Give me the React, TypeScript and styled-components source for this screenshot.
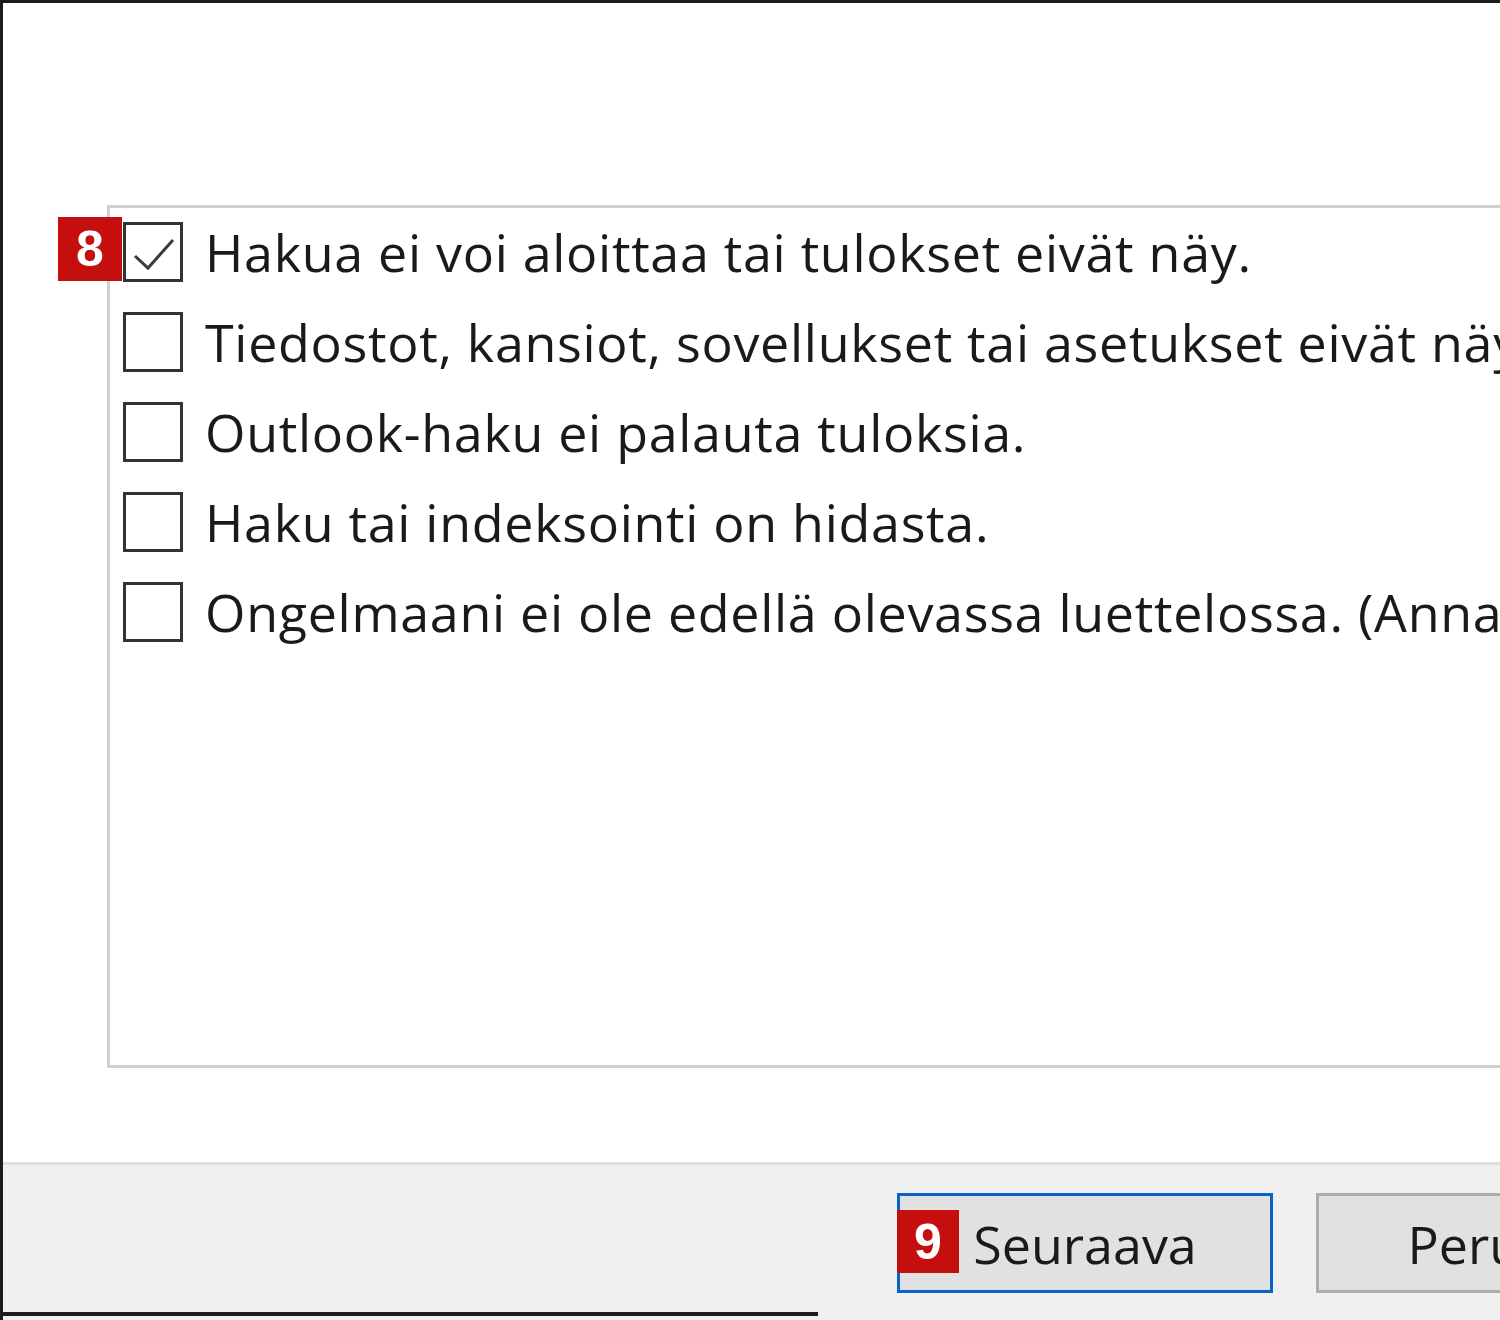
import React from 'react';
import styled, { createGlobalStyle } from 'styled-components';

const GlobalStyle = createGlobalStyle`
  html, body {
    margin: 0;
    padding: 0;
    background: #ffffff;
  }
  body {
    font-family: "Open Sans", "DejaVu Sans", sans-serif;
  }
`;

const items = [
  { label: 'Hakua ei voi aloittaa tai tulokset eivät näy.', checked: true, badge: '8' },
  { label: 'Tiedostot, kansiot, sovellukset tai asetukset eivät näy tuloksissa.', checked: false },
  { label: 'Outlook-haku ei palauta tuloksia.', checked: false },
  { label: 'Haku tai indeksointi on hidasta.', checked: false },
  { label: 'Ongelmaani ei ole edellä olevassa luettelossa. (Anna lisätietoja.)', checked: false },
];

export default function App() {
  return (
    <>
      <GlobalStyle />
      <Window>
        <Content>
          <ListBox>
            {items.map((item) => (
              <Row key={item.label}>
                <Box>
                  {item.badge && <Badge $variant="list">{item.badge}</Badge>}
                  {item.checked && (
                    <svg width="54" height="54" viewBox="0 0 54 54">
                      <polyline
                        points="9,31 22,43 47,15"
                        fill="none"
                        stroke="#3a3a3a"
                        strokeWidth="3"
                      />
                    </svg>
                  )}
                </Box>
                <Label>{item.label}</Label>
              </Row>
            ))}
          </ListBox>
        </Content>
        <Footer>
          <ButtonRow>
            <Button $primary>
              <Badge $variant="button">9</Badge>
              Seuraava
            </Button>
            <Button>Peruuta</Button>
          </ButtonRow>
          <BottomEdge />
        </Footer>
      </Window>
    </>
  );
}

const Window = styled.div`
  width: 1500px;
  height: 1320px;
  box-sizing: border-box;
  border-top: 3px solid #1c1c1c;
  border-left: 3px solid #1c1c1c;
  background: #ffffff;
  display: flex;
  flex-direction: column;
  overflow: hidden;
`;

const Content = styled.div`
  flex: 1;
  padding: 202px 0 0 104px;
`;

const ListBox = styled.div`
  box-sizing: border-box;
  width: 1500px;
  height: 863px;
  border: 3px solid #d0d0d0;
  padding: 14px 0 0 13px;
`;

const Row = styled.div`
  display: flex;
  align-items: center;
  height: 60px;
  margin-bottom: 30px;
  white-space: nowrap;
`;

const Box = styled.div`
  position: relative;
  flex: none;
  box-sizing: border-box;
  width: 60px;
  height: 60px;
  border: 3px solid #333333;
  background: #ffffff;
`;

const Label = styled.span`
  margin-left: 22px;
  font-size: 52px;
  letter-spacing: 0.7px;
  color: #1a1a1a;
  line-height: 60px;
`;

const Badge = styled.span<{ $variant: 'list' | 'button' }>`
  position: absolute;
  left: ${(p) => (p.$variant === 'list' ? '-68px' : '-3px')};
  top: ${(p) => (p.$variant === 'list' ? '-8px' : '14px')};
  width: ${(p) => (p.$variant === 'list' ? '64px' : '62px')};
  height: ${(p) => (p.$variant === 'list' ? '64px' : '63px')};
  background: #c50f0f;
  color: #ffffff;
  font-family: "Liberation Sans", Arial, sans-serif;
  font-weight: bold;
  font-size: 50px;
  letter-spacing: 0;
  line-height: 64px;
  text-align: center;
`;

const Footer = styled.div`
  flex: none;
  height: 158px;
  box-sizing: border-box;
  border-top: 3px solid #dedede;
  background: #f0f0f0;
  display: flex;
  flex-direction: column;
`;

const ButtonRow = styled.div`
  display: flex;
  gap: 43px;
  padding: 28px 0 0 894px;
`;

const Button = styled.button<{ $primary?: boolean }>`
  position: relative;
  flex: none;
  box-sizing: border-box;
  width: 376px;
  height: 100px;
  padding: 0;
  background: #e1e1e1;
  border: 3px solid ${(p) => (p.$primary ? '#0a64c8' : '#adadad')};
  font-family: "Open Sans", "DejaVu Sans", sans-serif;
  font-size: 52px;
  color: #1a1a1a;
  text-align: center;
`;

const BottomEdge = styled.div`
  width: 815px;
  height: 4px;
  margin-top: 19px;
  background: #1c1c1c;
`;
